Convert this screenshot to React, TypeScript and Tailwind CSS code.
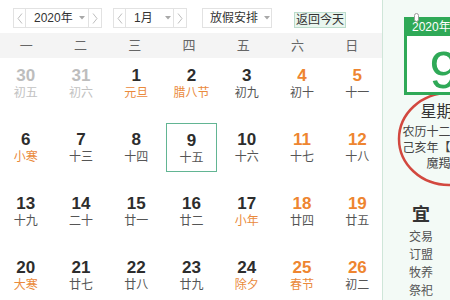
import React from 'react';

type Day = { d: string; l: string; other?: boolean; fest?: boolean; sel?: boolean };

const rows: Day[][] = [
  [
    { d: '30', l: '初五', other: true },
    { d: '31', l: '初六', other: true },
    { d: '1', l: '元旦', fest: true },
    { d: '2', l: '腊八节', fest: true },
    { d: '3', l: '初九' },
    { d: '4', l: '初十' },
    { d: '5', l: '十一' },
  ],
  [
    { d: '6', l: '小寒', fest: true },
    { d: '7', l: '十三' },
    { d: '8', l: '十四' },
    { d: '9', l: '十五', sel: true },
    { d: '10', l: '十六' },
    { d: '11', l: '十七' },
    { d: '12', l: '十八' },
  ],
  [
    { d: '13', l: '十九' },
    { d: '14', l: '二十' },
    { d: '15', l: '廿一' },
    { d: '16', l: '廿二' },
    { d: '17', l: '小年', fest: true },
    { d: '18', l: '廿四' },
    { d: '19', l: '廿五' },
  ],
  [
    { d: '20', l: '大寒', fest: true },
    { d: '21', l: '廿七' },
    { d: '22', l: '廿八' },
    { d: '23', l: '廿九' },
    { d: '24', l: '除夕', fest: true },
    { d: '25', l: '春节', fest: true },
    { d: '26', l: '初二' },
  ],
];

const weekdays = ['一', '二', '三', '四', '五', '六', '日'];

const Chevron: React.FC<{ dir: 'l' | 'r' }> = ({ dir }) => (
  <svg width="6" height="11" viewBox="0 0 6 11" className="block">
    <polyline
      points={dir === 'l' ? '5,0.5 1,5.5 5,10.5' : '1,0.5 5,5.5 1,10.5'}
      fill="none"
      stroke="#bdbdbd"
      strokeWidth="1"
    />
  </svg>
);

const Caret = () => (
  <svg width="6" height="4" viewBox="0 0 6 4" className="block">
    <polygon points="0,0 6,0 3,3.5" fill="#a8a8a8" />
  </svg>
);

const Stepper: React.FC<{ label: string; mid: string; caretGap: string }> = ({ label, mid, caretGap }) => (
  <div className="flex shrink-0 h-[20px] border border-[#e2e2e2] bg-white">
    <div className="w-[12px] shrink-0 flex items-center justify-center border-r border-[#e2e2e2]">
      <Chevron dir="l" />
    </div>
    <div className={`${mid} shrink-0 flex items-center pl-[8px] text-[12px] text-[#333] whitespace-nowrap`}>
      <span>{label}</span>
      <span className={caretGap}>
        <Caret />
      </span>
    </div>
    <div className="w-[13px] shrink-0 flex items-center justify-center border-l border-[#e2e2e2]">
      <Chevron dir="r" />
    </div>
  </div>
);

export default function App() {
  return (
    <div
      className="w-[450px] h-[300px] overflow-hidden flex bg-white"
      style={{ fontFamily: '"Liberation Sans", "Noto Sans CJK SC", sans-serif' }}
    >
      <div className="w-[382px] shrink-0 flex flex-col">
        <div className="h-[33px] shrink-0 flex items-start pt-[8px] pl-[13px]">
          <Stepper label="2020年" mid="w-[62px]" caretGap="ml-[6px]" />
          <div className="ml-[11px] shrink-0">
            <Stepper label="1月" mid="w-[47px]" caretGap="ml-[12px]" />
          </div>
          <div className="ml-[15px] shrink-0 h-[20px] w-[70px] border border-[#e2e2e2] flex items-center pl-[7px] text-[12px] text-[#333] whitespace-nowrap">
            <span>放假安排</span>
            <span className="ml-[6px]">
              <Caret />
            </span>
          </div>
          <div className="ml-[22px] mt-[4px] shrink-0 h-[16px] w-[52px] border border-[#bcdccc] bg-[#e9f6ef] flex items-center justify-center text-[12px] leading-none text-[#333] whitespace-nowrap">
            返回今天
          </div>
        </div>

        <div className="h-[25px] shrink-0 bg-[#f4f4f4]">
          <div className="-ml-px w-[380px] h-full grid grid-cols-7">
            {weekdays.map((w) => (
              <div key={w} className="flex items-center justify-center text-[13px] text-[#666]">
                {w}
              </div>
            ))}
          </div>
        </div>

        <div className="-ml-[2px] w-[387px] shrink-0 grid grid-cols-7">
          {rows.flat().map((c, i) => {
            const col = i % 7;
            const numColor = c.other ? 'text-[#bdbdbd]' : col >= 5 ? 'text-[#ee8530]' : 'text-[#2d2d2d]';
            const lunColor = c.other ? 'text-[#c2c2c2]' : c.fest ? 'text-[#ea8a3c]' : 'text-[#555]';
            return (
              <div key={i} className="h-[64px] flex justify-center pt-px">
                <div
                  className={`w-[51px] h-[49px] flex flex-col items-center pt-[7px] ${
                    c.sel ? 'border border-[#62b593]' : ''
                  }`}
                >
                  <span className={`text-[17px] font-bold leading-[20px] ${numColor}`}>{c.d}</span>
                  <span className={`text-[12px] leading-[14px] whitespace-nowrap ${lunColor}`}>{c.l}</span>
                </div>
              </div>
            );
          })}
        </div>
      </div>

      <div className="relative w-[124px] shrink-0 border-l border-[#cfe6d9] bg-[#f3faf6]">
        <svg className="absolute left-[14px] top-[91px]" width="104" height="96" viewBox="0 0 104 96">
          <ellipse cx="52" cy="48" rx="50" ry="46" fill="none" stroke="#d2483f" strokeWidth="2.5" />
        </svg>

        <div className="relative ml-[21px] mt-[17px] w-[80px]">
          <div className="absolute left-[10px] -top-[4px] w-[5px] h-[9px] rounded-full bg-white border border-[#9a9a9a]" />
          <div className="h-[19px] bg-[#2fa957] flex items-center justify-center text-[12px] text-white whitespace-nowrap">
            2020年01月
          </div>
          <div className="h-[59px] bg-white border-[3px] border-t-0 border-[#2fa957] flex justify-center">
            <span className="mt-[8px] text-[52px] leading-[52px] text-[#2fa957]">9</span>
          </div>
        </div>

        <div className="relative mt-[7px] flex flex-col items-center">
          <div className="text-[16px] leading-[20px] text-[#333]">星期四</div>
          <div className="mt-[2px] text-[12px] leading-[16px] text-[#444] whitespace-nowrap">农历十二月十五</div>
          <div className="text-[12px] leading-[16px] text-[#444] whitespace-nowrap">己亥年【猪年】</div>
          <div className="text-[12px] leading-[16px] text-[#444]">魔羯座</div>
        </div>

        <div className="mt-[32px] ml-[18px] w-[40px] flex flex-col items-center">
          <div className="text-[18px] font-bold leading-[22px] text-[#333]">宜</div>
          <div className="mt-[2px] flex flex-col items-center text-[12px] leading-[18px] text-[#555]">
            <span>交易</span>
            <span>订盟</span>
            <span>牧养</span>
            <span>祭祀</span>
          </div>
        </div>
      </div>
    </div>
  );
}
